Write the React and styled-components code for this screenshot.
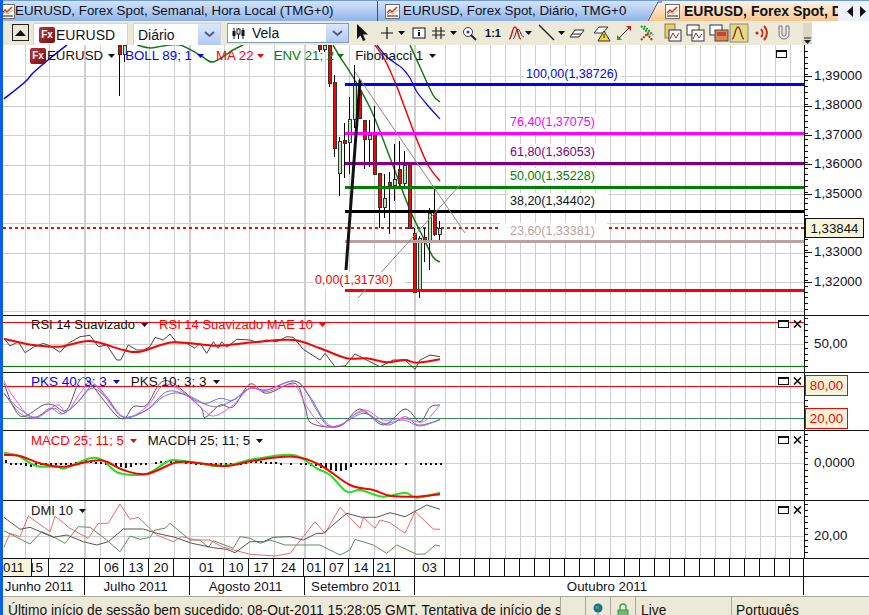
import styled, { createGlobalStyle } from "styled-components"

const GlobalStyle = createGlobalStyle`
html, body {
    margin: 0;
    padding: 0;
    overflow: hidden;
    background: white;
}
* { box-sizing: border-box; }
`

// points are read from the 3x crops, so they get scaled back to page pixels here
const crop = (str, ox, oy) =>
    str.trim().split(/\s+/).map((p) => {
        const [x, y] = p.split(",").map(Number)
        return `${(ox + x / 3).toFixed(1)},${(oy + y / 3).toFixed(1)}`
    }).join(" ")

// catmull-rom through the points, for the averaged lines
const curve = (str) => {
    const p = str.trim().split(/\s+/).map((s) => s.split(",").map(Number))
    let d = `M${p[0][0]} ${p[0][1]}`
    for (let i = 0; i < p.length - 1; i++) {
        const a = p[i - 1] || p[i]
        const b = p[i]
        const c = p[i + 1]
        const e = p[i + 2] || c
        const c1 = [b[0] + (c[0] - a[0]) / 6, b[1] + (c[1] - a[1]) / 6]
        const c2 = [c[0] - (e[0] - b[0]) / 6, c[1] - (e[1] - b[1]) / 6]
        d += `C${c1[0].toFixed(1)} ${c1[1].toFixed(1)} ${c2[0].toFixed(1)} ${c2[1].toFixed(1)} ${c[0]} ${c[1]}`
    }
    return d
}

const GRID_X = [25, 49, 85, 100, 124, 149, 174, 190, 224, 249, 274, 305, 325, 349, 374, 395, 415, 445]
for (let x = 460; x < 804; x += 15) GRID_X.push(x)
const THICK = [85, 190, 305, 415]

const Window = styled.div`
width: 869px;
height: 615px;
overflow: hidden;
display: flex;
flex-direction: column;
border-left: 3px solid #0a5fe8;
font-family: "Liberation Sans", Arial, sans-serif;
color: #10101c;
background: white;
`

const TabBar = styled.div`
position: relative;
height: 21px;
flex: none;
display: flex;
background: linear-gradient(#d3e3fa 0, #b9d1f3 40%, #8fb3e8 100%);
border-top: 1px solid #6f9ade;
`

const Tab = styled.div`
width: ${(p) => p.$w}px;
flex: none;
display: flex;
align-items: center;
gap: ${(p) => p.$gap}px;
font-size: 13.35px;
line-height: 20px;
white-space: nowrap;
overflow: hidden;
border-right: 1px solid ${(p) => (p.$last ? "transparent" : "#2b4f9c")};
`

const ActiveTab = styled(Tab)`
width: 191px;
margin-left: -11px;
padding-left: 18px;
font-size: 14px;
font-weight: bold;
border-right: none;
background: linear-gradient(#fff3e2, #f9c68e);
clip-path: polygon(10px 0, 100% 0, 100% 100%, 0 100%);
`

const TabSlant = styled.svg`
position: absolute;
left: 644px;
top: 0;
`

const TabIcon = styled.svg`
flex: none;
margin-left: ${(p) => p.$ml}px;
`

const TabArrows = styled.div`
flex: 1;
display: flex;
align-items: center;
gap: 7px;
padding-left: 9px;
background: #eef3fb;
`

const ToolRow = styled.div`
height: 24px;
flex: none;
display: flex;
`

const Toolbar = styled.div`
width: 809px;
height: 24px;
display: flex;
align-items: flex-start;
padding: 2px 0 0 9px;
background: #ece9d8;
border-radius: 0 0 3px 0;
`

const CollapseButton = styled.div`
width: 17px;
height: 17px;
margin-top: 1px;
display: flex;
align-items: center;
justify-content: center;
border: 1px solid #222;
`

const SymbolBox = styled.div`
width: 95px;
height: 22px;
margin-left: 4px;
display: flex;
align-items: center;
gap: 1px;
padding: 0 0 0 5px;
font-size: 14px;
background: white;
border: 1px solid #c9d3e2;
border-bottom: none;
`

const Combo = styled.div`
width: ${(p) => p.$w}px;
height: ${(p) => (p.$tall ? 20 : 22)}px;
margin-left: ${(p) => p.$ml}px;
display: flex;
align-items: center;
justify-content: space-between;
font-size: 14px;
padding-left: 4px;
background: white;
border: 1px solid ${(p) => (p.$tall ? "#7f9db9" : "#c9d3e2")};
${(p) => (p.$tall ? "" : "border-bottom: none;")}
`

const ComboLabel = styled.span`
display: flex;
align-items: center;
gap: 7px;
`

const ComboArrow = styled.div`
width: 22px;
height: 100%;
display: flex;
align-items: center;
justify-content: center;
background: linear-gradient(#dbe6fb, #b4caf3);
`

const Tool = styled.div`
width: ${(p) => p.$w || 20}px;
height: 20px;
flex: none;
margin-left: ${(p) => p.$ml || 0}px;
display: flex;
align-items: center;
justify-content: center;
font-size: 11px;
font-weight: bold;
`

const Grip = styled.div`
width: 9px;
height: 21px;
flex: none;
margin-left: ${(p) => p.$ml}px;
display: flex;
align-items: flex-end;
justify-content: center;
background: #dcd8c4;
`

const Charts = styled.div`
flex: none;
display: flex;
flex-direction: column;
`

const Pane = styled.div`
height: ${(p) => p.$h}px;
flex: none;
display: flex;
border-bottom: 1px solid #111;
`

const Plot = styled.div`
position: relative;
width: 801px;
flex: none;
height: 100%;
overflow: hidden;
svg { display: block; }
`

const Axis = styled.div`
position: relative;
flex: 1;
height: 100%;
border-left: 1px solid #111;
svg { display: block; }
`

const AxisLabel = styled.div`
position: absolute;
left: 9px;
top: ${(p) => p.$y}px;
font-size: 13.3px;
line-height: 16px;
white-space: nowrap;
`

const PriceTag = styled.div`
position: absolute;
left: 0;
top: ${(p) => p.$y}px;
width: ${(p) => p.$w}px;
height: ${(p) => p.$h}px;
display: flex;
align-items: center;
justify-content: center;
font-size: 13.3px;
color: ${(p) => p.$color};
background: #f5f5dc;
border: 1px solid ${(p) => p.$border};
`

const Legend = styled.div`
position: absolute;
left: ${(p) => p.$left}px;
top: ${(p) => p.$top}px;
display: flex;
align-items: center;
font-size: ${(p) => p.$size}px;
line-height: 16px;
white-space: nowrap;
`

const LegendItem = styled.span`
display: flex;
align-items: center;
gap: ${(p) => p.$gap || 6}px;
margin-right: ${(p) => p.$mr || 0}px;
color: ${(p) => p.$color};
`

const LegendFx = styled.span`
display: flex;
margin-right: 1px;
`

const FibLabel = styled.div`
position: absolute;
left: ${(p) => p.$x}px;
top: ${(p) => p.$y}px;
width: ${(p) => p.$w}px;
height: 17px;
padding-left: ${(p) => p.$pad}px;
font-size: 12.5px;
line-height: 17px;
white-space: nowrap;
color: ${(p) => p.$color};
background: white;
`

const PaneButtons = styled.div`
position: absolute;
right: ${(p) => p.$right}px;
top: ${(p) => p.$top}px;
display: flex;
gap: 4px;
`

const FxBadge = styled.span`
width: 16px;
height: 16px;
flex: none;
display: flex;
align-items: center;
justify-content: center;
font-size: 10px;
font-weight: bold;
color: white;
border-radius: 2px;
background: linear-gradient(135deg, #b5333a, #7d0f16);
`

const TimeRow = styled.div`
height: ${(p) => p.$h}px;
flex: none;
display: flex;
border-bottom: ${(p) => (p.$line ? "1px solid #111" : "none")};
`

const TimeCell = styled.div`
width: ${(p) => p.$w}px;
flex: none;
display: flex;
align-items: center;
justify-content: ${(p) => p.$align || "center"};
padding-right: ${(p) => p.$pr || 0}px;
overflow: hidden;
font-size: 13.3px;
white-space: nowrap;
border-right: 1px solid #111;
background: ${(p) => p.$bg || "white"};
`

const StatusBar = styled.div`
flex: 1;
display: flex;
margin-top: 1px;
background: #ece9d8;
border-top: 1px solid #a9a79a;
font-size: 13.8px;
color: #16100c;
`

const StatusCell = styled.div`
width: ${(p) => p.$w}px;
flex: ${(p) => (p.$grow ? 1 : "none")};
overflow: hidden;
white-space: nowrap;
padding: 6px 0 0 ${(p) => p.$pad || 0}px;
border-right: ${(p) => (p.$grow ? "none" : "1px solid #a9a79a")};
display: flex;
justify-content: ${(p) => (p.$center ? "center" : "flex-start")};
`

function Caret({ color = "#111", size = 7 }) {
    return (
        <svg width={size} height={4} viewBox="0 0 7 4">
            <polygon points="0,0 7,0 3.5,4" fill={color} />
        </svg>
    )
}

function ChartTabIcon({ ml = 0 }) {
    return (
        <TabIcon $ml={ml} width="15" height="15" viewBox="0 0 15 15">
            <rect x="0.5" y="0.5" width="14" height="14" fill="white" stroke="#6d6d6d" />
            <polyline points="2,9 5,6 7,8 12,3" fill="none" stroke="#d9301e" strokeWidth="1.5" />
            <polyline points="2,11 5,8 8,10 13,6" fill="none" stroke="#e5a03a" />
            <rect x="2" y="11" width="11" height="2" fill="#8a8a8a" />
        </TabIcon>
    )
}

function ChevronDown() {
    return (
        <svg width="11" height="7" viewBox="0 0 11 7">
            <polyline points="1,1 5.5,5 10,1" fill="none" stroke="#4d6185" strokeWidth="2" />
        </svg>
    )
}

function MiniChart({ x = 5, y = 3 }) {
    return (
        <g>
            <rect x={x} y={y} width="12" height="11" fill="white" stroke="#333" />
            <polyline points={`${x + 1},${y + 9} ${x + 4},${y + 3} ${x + 7},${y + 8} ${x + 10},${y + 4}`} fill="none" stroke="#b02020" />
        </g>
    )
}

const Svg = ({ children }) => <svg width="20" height="20" viewBox="0 0 20 20">{children}</svg>

const wave = "M3 16 C6 16 6 4 9 4 C12 4 12 16 15 16"

const TOOLS = [
    { ml: 2, icon: <polygon points="6,1 6,16 9.5,12.5 12,18 14.5,17 12,11.5 17,11.5" fill="#111" /> },
    { ml: 6, icon: <path d="M10 4v12M4 10h12" stroke="#111" strokeWidth="1.2" /> },
    { w: 8, caret: true },
    { ml: 4, icon: <><rect x="4" y="5" width="12" height="10" fill="white" stroke="#111" /><path d="M9 7h2v1H9zM9 9h2v4H9z" fill="#111" /></> },
    { icon: <path d="M7 4v12M12 4v12M3 8h13M3 12h13" stroke="#222" strokeWidth="1.2" /> },
    { w: 8, caret: true },
    { ml: 3, icon: <><circle cx="8" cy="9" r="4.5" fill="white" stroke="#334" /><circle cx="8" cy="9" r="1.6" fill="#2244cc" /><path d="M11 12l5 5" stroke="#222" strokeWidth="2" /></> },
    { ml: 3, text: "1:1" },
    { ml: 3, icon: <><path d={wave} fill="none" stroke="#c01818" strokeWidth="1.4" /><path d="M7 16 C9 16 10 6 12 6 C14 6 15 14 18 14" fill="none" stroke="#333" /></> },
    { w: 8, ml: -2, caret: true },
    { ml: 5, icon: <path d="M2 2l15 15" stroke="#222" strokeWidth="1.4" /> },
    { w: 8, caret: true },
    { ml: 2, icon: <path d="M3 14l5-7h9l-5 7z M5 11h9" fill="white" stroke="#222" /> },
    { ml: 5, icon: <><path d="M2 10l5-6h9l-5 6z" fill="white" stroke="#333" /><polygon points="12,8 18,18 6,18" fill="#f4d53a" stroke="#333" /><path d="M12 11v4" stroke="#222" /></> },
    { ml: 2, icon: <><path d="M4 16L16 4" stroke="#222" /><polygon points="12,3 17,3 17,8" fill="#d02020" /><polygon points="3,12 3,17 8,17" fill="#28a428" /></> },
    { ml: 3, icon: <><path d="M4 3l9 9M7 3l9 9" stroke="#1f9a2c" strokeWidth="2" strokeDasharray="2 1" /><path d="M4 17l6-6M15 17l-5-6" stroke="#c02525" strokeWidth="2" strokeDasharray="2 1" /></> },
    { ml: 6, icon: <><rect x="2" y="1" width="10" height="14" fill="#e9c97a" stroke="#8a7a50" /><rect x="6" y="7" width="12" height="11" fill="white" stroke="#333" /><path d="M7 16l3-6 3 5 3-5" fill="none" stroke="#b02020" /></> },
    { ml: 3, icon: <><rect x="1" y="2" width="12" height="10" fill="white" stroke="#333" /><MiniChart x={6} y={7} /></> },
    { ml: 3, icon: <><rect x="1" y="2" width="12" height="10" fill="white" stroke="#333" /><rect x="6" y="7" width="13" height="11" fill="#d88a4a" stroke="#445" /><rect x="8" y="9" width="9" height="4" fill="#c0453a" /></> },
    { icon: <><rect x="1" y="1" width="18" height="18" fill="#dfdc86" stroke="#888" /><path d={wave} fill="none" stroke="#a02020" strokeWidth="1.3" /></> },
    { ml: 3, icon: <><circle cx="5" cy="10" r="1.6" fill="#d02a1f" /><path d="M9 6a6 6 0 0 1 0 8M12 3a10 10 0 0 1 0 14" fill="none" stroke="#c9301f" strokeWidth="2" /></> },
    { ml: 2, icon: <path d="M5 3v8a5 5 0 0 0 10 0V3h-3v8a2 2 0 0 1-4 0V3z" fill="#e9e7dc" stroke="#777" /> },
]

function Toolbars() {
    return (
        <ToolRow>
            <Toolbar>
                <CollapseButton>
                    <svg width="11" height="6" viewBox="0 0 11 6"><polygon points="0,6 11,6 5.5,0" fill="#111" /></svg>
                </CollapseButton>
                <SymbolBox><FxBadge>Fx</FxBadge>EURUSD</SymbolBox>
                <Combo $w={88} $ml={5}><ComboLabel>Diário</ComboLabel><ComboArrow><ChevronDown /></ComboArrow></Combo>
                <Combo $w={122} $ml={6} $tall>
                    <ComboLabel>
                        <svg width="13" height="11" viewBox="0 0 13 11">
                            <path d="M2 0v11M6.5 0v11M11 0v11" stroke="#111" />
                            <rect x="0.5" y="3" width="3" height="5" fill="#111" />
                            <rect x="5" y="1" width="3" height="5" fill="white" stroke="#111" />
                            <rect x="9.5" y="2" width="3" height="6" fill="#111" />
                        </svg>
                        Vela
                    </ComboLabel>
                    <ComboArrow><ChevronDown /></ComboArrow>
                </Combo>
                {TOOLS.map((t, i) => (
                    <Tool key={i} $w={t.w} $ml={t.ml}>
                        {t.caret ? <Caret /> : t.text ? t.text : <Svg>{t.icon}</Svg>}
                    </Tool>
                ))}
                <Grip $ml={9}><svg width="7" height="7" viewBox="0 0 7 7"><path d="M0 1h7" stroke="#222" /><polygon points="0,3 7,3 3.5,7" fill="#222" /></svg></Grip>
            </Toolbar>
        </ToolRow>
    )
}

function Tabs() {
    return (
        <TabBar>
            <Tab $w={375} $gap={0}><ChartTabIcon ml={-3} />EURUSD, Forex Spot, Semanal, Hora Local (TMG+0)</Tab>
            <Tab $w={280} $gap={3} $last><ChartTabIcon ml={7} />EURUSD, Forex Spot, Diário, TMG+0</Tab>
            <ActiveTab $gap={4}><ChartTabIcon />EURUSD, Forex Spot, Diário, TMG+0</ActiveTab>
            <TabSlant width="16" height="21" viewBox="0 0 16 21">
                <path d="M1 20L11 1h4" fill="none" stroke="#2b4f9c" />
            </TabSlant>
            <TabArrows>
                <svg width="6" height="11" viewBox="0 0 6 11"><polygon points="6,0 6,11 0,5.5" fill="#111" /></svg>
                <svg width="6" height="11" viewBox="0 0 6 11"><polygon points="0,0 0,11 6,5.5" fill="#111" /></svg>
            </TabArrows>
        </TabBar>
    )
}

function Grid({ top, bottom, rows = [] }) {
    return (
        <g shapeRendering="crispEdges">
            {rows.map((y) => <line key={y} x1="3" x2="804" y1={y} y2={y} stroke="#cfcfcf" />)}
            {GRID_X.map((x) => (
                <line key={x} x1={x} x2={x} y1={top} y2={bottom} stroke="#cfcfcf" strokeWidth={THICK.includes(x) ? 2 : 1} />
            ))}
        </g>
    )
}

function Line({ pts, color, w = 1 }) {
    return <polyline points={pts} fill="none" stroke={color} strokeWidth={w} strokeLinejoin="round" />
}

function Curve({ pts, color, w = 1 }) {
    return <path d={curve(pts)} fill="none" stroke={color} strokeWidth={w} />
}

function RestoreClose({ top, close = true }) {
    return (
        <PaneButtons $top={top} $right={close ? 2 : 17}>
            <svg width="11" height="8" viewBox="0 0 11 8">
                <rect x="0.5" y="0.5" width="10" height="7" fill="white" stroke="#111" />
                <path d="M0 1.5h11" stroke="#111" />
            </svg>
            {close && (
                <svg width="9" height="8" viewBox="0 0 9 8">
                    <path d="M1 0.5l7 7M8 0.5l-7 7" stroke="#111" strokeWidth="1.6" />
                </svg>
            )}
        </PaneButtons>
    )
}

function Ticks({ top, bottom, step, majors = [] }) {
    const lines = []
    for (let y = bottom; y > top; y -= step) lines.push(y)
    return (
        <svg width="12" height={bottom - top} viewBox={`0 ${top} 12 ${bottom - top}`}>
            <g stroke="#111" shapeRendering="crispEdges">
                {lines.map((y) => <line key={y} x1="0" x2="3" y1={Math.round(y) + 0.5} y2={Math.round(y) + 0.5} />)}
                {majors.map((y) => <line key={y} x1="0" x2="7" y1={y} y2={y} />)}
            </g>
        </svg>
    )
}

// x, wick top, wick bottom, body top, body bottom, up
const CANDLES = [
    [119, 45, 96, 45, 54, 0], [124, 45, 62, 45, 54, 1], [319, 45, 52, 45, 49, 0], [324, 45, 52, 45, 49, 1],
    [329, 45, 87, 45, 83, 0], [334, 75, 157, 82, 148, 0], [339, 137, 196, 141, 173, 1], [344, 123, 178, 140, 143, 0],
    [349, 97, 174, 119, 142, 1], [354, 65, 128, 85, 119, 1], [359, 78, 118, 90, 118, 0], [364, 120, 169, 120, 139, 0],
    [369, 120, 167, 135, 139, 1], [374, 106, 175, 135, 174, 0], [379, 173, 228, 173, 207, 0], [384, 174, 218, 198, 207, 1],
    [389, 172, 234, 182, 185, 0], [394, 144, 201, 179, 185, 1], [399, 141, 188, 169, 183, 0], [404, 151, 187, 165, 183, 1],
    [409, 165, 228, 165, 228, 0], [414, 228, 292, 233, 292, 0], [419, 236, 298, 238, 290, 1], [424, 228, 262, 237, 240, 0],
    [429, 208, 270, 213, 240, 1], [434, 188, 236, 213, 234, 0], [439, 221, 240, 228, 234, 1],
]

const FIB_LINES = [
    [84, "#0000ff", 3], [133, "#ff00ff", 3], [163, "#800080", 3], [187.5, "#008000", 3],
    [211.5, "#000000", 2.5], [241.5, "#bc9f9f", 3], [290.5, "#ff0000", 3],
]

function MainPane() {
    return (
        <Pane $h={271}>
            <Plot>
                <svg width="801" height="270" viewBox="3 45 801 270">
                    <Grid top={45} bottom={315} rows={[76, 106, 135, 165, 194, 223, 253, 282, 311]} />
                    <line x1="3" x2="804" y1="228" y2="228" stroke="#ff0000" strokeWidth="2" strokeDasharray="3 3" />
                    <Curve pts="4,99 25,82 33,73 48,60 67,45" color="#0000ff" w={1.5} />
                    <Curve pts="137,45 150,48 163,46 180,45 200,55 213,62 233,50 243,45" color="#157a15" w={1.5} />
                    <Curve pts="377,45 387,57 402,68 410,78 417,92 430,108 440,119" color="#0000ff" w={1.2} />
                    <Curve pts="410,45 420,67 433,95 440,102" color="#157a15" w={1.5} />
                    <Curve pts="333,45 340,57 353,77 372,112 392,163 410,210 423,237 433,257 440,262" color="#157a15" w={1.5} />
                    <Curve pts="375,45 385,60 397,87 415,135 428,165 440,181" color="#ff0000" w={1.5} />
                    <g shapeRendering="crispEdges">
                        {CANDLES.map(([x, t, b, bt, bb, up]) => (
                            <g key={x}>
                                <line x1={x + 0.5} x2={x + 0.5} y1={t} y2={b} stroke="#000" />
                                <rect x={x - 1} y={bt} width="3" height={bb - bt} fill={up ? "#b9e8b4" : "#ff0000"} stroke="#333" />
                            </g>
                        ))}
                        {FIB_LINES.map(([y, c, w]) => <line key={y} x1="345" x2="804" y1={y} y2={y} stroke={c} strokeWidth={w} />)}
                    </g>
                    <Line pts="346,270 360,80" color="#111" w={3} />
                    <Line pts="355,72 465,233" color="#8a8a8a" />
                    <Line pts="358,298 460,185" color="#8a8a8a" />
                </svg>
                <Legend $left={27} $top={3} $size={13.3}>
                    <LegendFx><FxBadge>Fx</FxBadge></LegendFx>
                    <LegendItem $gap={5} $mr={10} $color="#111">EURUSD <Caret /></LegendItem>
                    <LegendItem $gap={5} $mr={12} $color="#0000ff">BOLL 89; 1 <Caret color="#0000ff" /></LegendItem>
                    <LegendItem $gap={3} $mr={10} $color="#ff0000">MA 22 <Caret color="#ff0000" /></LegendItem>
                    <LegendItem $gap={3} $mr={11} $color="#008000">ENV 21; 2 <Caret color="#008000" /></LegendItem>
                    <LegendItem $gap={6} $color="#111">Fibonacci 1 <Caret /></LegendItem>
                </Legend>
                <FibLabel $x={521} $y={21} $w={97} $pad={2} $color="#0000ff">100,00(1,38726)</FibLabel>
                <FibLabel $x={505} $y={69} $w={100} $pad={2} $color="#ff00ff">76,40(1,37075)</FibLabel>
                <FibLabel $x={505} $y={99} $w={100} $pad={2} $color="#800080">61,80(1,36053)</FibLabel>
                <FibLabel $x={505} $y={123} $w={100} $pad={2} $color="#008000">50,00(1,35228)</FibLabel>
                <FibLabel $x={505} $y={148} $w={100} $pad={2} $color="#111">38,20(1,34402)</FibLabel>
                <FibLabel $x={497} $y={178} $w={107} $pad={10} $color="#bc9f9f">23,60(1,33381)</FibLabel>
                <FibLabel $x={310} $y={227} $w={92} $pad={2} $color="#ff0000">0,00(1,31730)</FibLabel>
                <RestoreClose top={5} close={false} />
            </Plot>
            <Axis>
                <Ticks top={45} bottom={315} step={5.87} majors={[76.5, 106.5, 135.5, 164.5, 194.5, 223.5, 252.5, 282.5]} />
                {[["1,39000", 76], ["1,38000", 105], ["1,37000", 135], ["1,36000", 164], ["1,35000", 194], ["1,33000", 252], ["1,32000", 282]].map(([t, y]) => (
                    <AxisLabel key={t} $y={y - 45 - 8}>{t}</AxisLabel>
                ))}
                <PriceTag $y={173} $w={59} $h={20} $color="#111" $border="#111">1,33844</PriceTag>
            </Axis>
        </Pane>
    )
}

const RSI_BLACK = "12,85 30,108 55,95 75,128 100,112 130,100 155,110 180,127 205,100 240,80 270,76 295,110 320,105 350,150 362,150 385,105 410,120 430,120 450,110 465,82 490,90 510,72 530,98 560,100 585,115 600,100 620,130 640,95 655,115 665,95 680,112 710,88 750,90 775,98 800,90 830,95 860,80 880,82 910,118 960,150 975,130 1005,170 1035,168 1065,132 1100,150 1140,170 1180,150 1215,150 1245,178 1260,150 1290,135 1320,140"
const RSI_RED = "12,87 50,95 100,105 180,110 270,93 370,120 420,125 520,97 650,107 760,97 880,90 960,115 1040,145 1100,145 1160,157 1215,150 1250,158 1320,148"
const PKS_BLUE = "12,250 50,290 105,322 150,295 185,312 230,280 280,225 320,260 370,320 440,300 490,260 540,250 610,280 660,265 700,270 750,235 800,240 885,213 930,260 980,340 1020,345 1090,310 1150,340 1210,330 1260,348 1320,328"
const PKS_MAGENTA = "12,212 40,260 100,325 170,285 200,305 240,250 270,215 300,240 370,322 440,290 490,225 540,240 600,290 640,318 700,285 750,235 800,245 880,225 920,290 965,345 1020,345 1090,300 1150,330 1210,325 1270,335 1320,285"
const PKS_BLACK = "12,220 40,290 70,320 130,285 160,285 200,300 240,210 270,220 360,325 400,290 440,285 480,220 520,220 600,290 615,322 660,285 700,290 750,222 800,250 885,220 915,290 935,340 1020,348 1080,297 1150,345 1215,297 1260,335 1290,292 1320,285"
const PKS_GREY = "12,250 60,310 105,322 160,295 190,310 230,280 275,235 320,265 370,322 440,300 500,245 560,255 640,290 700,270 750,235 800,240 890,215 950,300 980,345 1020,348 1085,305 1160,345 1215,320 1255,345 1320,330"
const MACD_GREEN = "12,68 55,78 110,108 170,110 195,115 270,85 310,92 355,128 435,133 490,102 520,90 600,100 640,108 690,105 760,88 880,75 950,115 990,135 1040,185 1080,180 1150,200 1215,188 1250,203 1320,188"
const MACD_RED = "12,75 60,78 120,100 190,110 280,92 320,95 370,120 440,132 530,97 600,100 680,108 760,92 880,80 960,105 1050,165 1120,180 1170,197 1250,200 1320,193"
const DMI_BLACK = "12,262 60,298 90,292 160,322 200,315 250,335 290,345 325,335 370,297 430,297 470,310 525,322 575,340 640,353 680,358 705,368 750,335 790,335 820,322 870,320 910,330 950,310 970,310 1040,250 1085,262 1130,262 1170,248 1215,260 1280,225 1320,238"
const DMI_RED = "12,352 30,310 60,320 85,258 150,305 165,258 210,295 265,325 295,280 325,280 360,222 390,268 415,262 470,315 520,335 545,320 590,330 630,330 665,350 750,373 825,378 870,370 910,320 945,275 975,310 1020,232 1080,295 1090,262 1125,295 1140,270 1170,278 1215,310 1245,245 1300,297 1320,298"
const DMI_GREEN = "12,302 50,322 90,342 125,305 160,320 195,340 235,290 270,292 320,330 360,365 390,318 420,328 450,322 465,300 495,295 510,280 570,330 600,330 625,352 640,332 700,355 720,320 750,325 780,340 810,330 855,345 885,345 960,345 1020,375 1050,360 1065,328 1120,345 1160,370 1190,345 1250,373 1275,372 1305,345 1320,348"

// MACDH height per bar, one bar every 5px starting at x=5
const HIST = [3, 0, 0, 0, -3, -4, -3, -2, -1, -1, -1, -1, 0, 0, 1, 2, 3, 2, 1, 1, 0, -2, -3, -4, -5, -4, -2, -1, -1, null, 1, 2, 2, 3, 2, 2, 1, 1, 0, 0, -1, -1, -1, -1, 0, 0, 0, 0, 1, 2, 2, 2, 1, 1, 1, 0, null, 0, null, 0, -2, -3, -3, -5, -6, -7, -8, -8, -7, -4, -1, -1, -1, -1, -1, -1, -1, -1, 0, null, 0, null, null, -2, -1, -1, 0, 0]

function SubPane({ h, top, rows, legendTop, legendSize, children, legend, buttons, axis }) {
    return (
        <Pane $h={h + 1}>
            <Plot>
                <svg width="801" height={h} viewBox={`3 ${top} 801 ${h}`}>
                    <Grid top={top} bottom={top + h} rows={rows} />
                    {children}
                </svg>
                <Legend $left={28} $top={legendTop} $size={legendSize}>{legend}</Legend>
                <RestoreClose top={buttons} />
            </Plot>
            <Axis>
                <Ticks top={top} bottom={top + h} step={6} />
                {axis}
            </Axis>
        </Pane>
    )
}

function SubPanes() {
    return (
        <>
            <SubPane h={56} top={316} rows={[344]} legendTop={1} legendSize={13} buttons={4}
                legend={<>
                    <LegendItem $mr={11} $color="#111">RSI 14 Suavizado <Caret /></LegendItem>
                    <LegendItem $color="#ff0000">RSI 14 Suavizado MAE 10 <Caret color="#ff0000" /></LegendItem>
                </>}
                axis={<AxisLabel $y={20}>50,00</AxisLabel>}>
                <line x1="3" x2="804" y1="322.5" y2="322.5" stroke="#ff0000" />
                <line x1="3" x2="804" y1="366.5" y2="366.5" stroke="#008000" />
                <Line pts={crop(RSI_BLACK, 0, 310)} color="#444" />
                <Curve pts={crop(RSI_RED, 0, 310)} color="#ff0000" w={2} />
            </SubPane>
            <SubPane h={57} top={373} rows={[402]} legendTop={1} legendSize={13.5} buttons={4}
                legend={<>
                    <LegendItem $mr={11} $color="#0000ff">PKS 40; 3; 3 <Caret color="#0000ff" /></LegendItem>
                    <LegendItem $color="#111">PKS 10; 3; 3 <Caret /></LegendItem>
                </>}
                axis={<>
                    <PriceTag $y={2} $w={43} $h={21} $color="#ff0000" $border="#ff0000">80,00</PriceTag>
                    <PriceTag $y={35} $w={43} $h={21} $color="#ff0000" $border="#ff0000">20,00</PriceTag>
                </>}>
                <line x1="3" x2="804" y1="386.5" y2="386.5" stroke="#ff0000" />
                <line x1="3" x2="804" y1="418.5" y2="418.5" stroke="#2e8b57" />
                <Curve pts={crop(PKS_BLACK, 0, 310)} color="#555" />
                <Curve pts={crop(PKS_GREY, 0, 310)} color="#8a6f8a" />
                <Curve pts={crop(PKS_BLUE, 0, 310)} color="#6a6aff" />
                <Curve pts={crop(PKS_MAGENTA, 0, 310)} color="#f050f0" />
            </SubPane>
            <SubPane h={69} top={431} rows={[463]} legendTop={2} legendSize={13.2} buttons={5}
                legend={<>
                    <LegendItem $mr={11} $color="#ff0000">MACD 25; 11; 5 <Caret color="#ff0000" /></LegendItem>
                    <LegendItem $color="#111">MACDH 25; 11; 5 <Caret /></LegendItem>
                </>}
                axis={<AxisLabel $y={24}>0,0000</AxisLabel>}>
                <g shapeRendering="crispEdges">
                    {HIST.map((v, i) => v === null ? null : (
                        <rect key={i} x={5 + i * 5} y={v > 0 ? 463 - v : 463} width="2" height={Math.max(Math.abs(v), 1.5)} fill="#111" />
                    ))}
                </g>
                <Curve pts={crop(MACD_GREEN, 0, 430)} color="#22e022" w={2} />
                <Curve pts={crop(MACD_RED, 0, 430)} color="#ff0000" w={2} />
            </SubPane>
            <SubPane h={57} top={501} rows={[536]} legendTop={2} legendSize={13} buttons={5}
                legend={<LegendItem $color="#111">DMI 10 <Caret /></LegendItem>}
                axis={<AxisLabel $y={27}>20,00</AxisLabel>}>
                <Line pts={crop(DMI_GREEN, 0, 430)} color="#5f8f5f" />
                <Line pts={crop(DMI_RED, 0, 430)} color="#f06a6a" />
                <Line pts={crop(DMI_BLACK, 0, 430)} color="#555" />
            </SubPane>
        </>
    )
}

const TICKS = [
    [29, "011", "#f5f5dc", "flex-start"], [17, "15", "#fff", "flex-end", 5], [36, "22"], [15, ""], [24, "06"], [25, "13"], [25, "20"], [16, ""],
    [34, "01"], [25, "10"], [25, "17"], [30, "24"], [21, "01"], [24, "07"], [25, "14"], [21, "21"], [20, ""], [30, "03"],
]
for (let x = 445; x < 790; x += 15) TICKS.push([15, ""])
TICKS.push([14, ""])

function TimeAxis() {
    return (
        <>
            <TimeRow $h={18} $line>
                {TICKS.map(([w, text, bg, align, pr], i) => (
                    <TimeCell key={i} $w={w} $bg={bg} $align={align} $pr={pr}>{text}</TimeCell>
                ))}
            </TimeRow>
            <TimeRow $h={18}>
                <TimeCell $w={82} $pr={9}>Junho 2011</TimeCell>
                <TimeCell $w={105} $pr={3}>Julho 2011</TimeCell>
                <TimeCell $w={115} $pr={3}>Agosto 2011</TimeCell>
                <TimeCell $w={110} $pr={7}>Setembro 2011</TimeCell>
                <TimeCell $w={389} $pr={4}>Outubro 2011</TimeCell>
            </TimeRow>
        </>
    )
}

function Status() {
    return (
        <StatusBar>
            <StatusCell $w={558} $pad={5}>Último início de sessão bem sucedido: 08-Out-2011 15:28:05 GMT. Tentativa de início de sessão</StatusCell>
            <StatusCell $w={25} />
            <StatusCell $w={25} $center>
                <svg width="12" height="14" viewBox="0 0 12 14">
                    <circle cx="6" cy="5" r="4.5" fill="#1e6aa8" />
                    <path d="M3 3h4v3H4z" fill="#3aa24a" />
                    <path d="M6 9v5" stroke="#888" />
                </svg>
            </StatusCell>
            <StatusCell $w={25} $center>
                <svg width="14" height="14" viewBox="0 0 14 14">
                    <path d="M4 7V4a3 3 0 0 1 6 0v3" fill="none" stroke="#5a9a5a" strokeWidth="1.5" />
                    <rect x="2" y="7" width="10" height="7" fill="#6cbf6c" stroke="#3e8a3e" />
                </svg>
            </StatusCell>
            <StatusCell $w={96} $pad={5}>Live</StatusCell>
            <StatusCell $grow $pad={4}>Português</StatusCell>
        </StatusBar>
    )
}

export default function App() {
    return (
        <>
            <GlobalStyle />
            <Window>
                <Tabs />
                <Toolbars />
                <Charts>
                    <MainPane />
                    <SubPanes />
                    <TimeAxis />
                </Charts>
                <Status />
            </Window>
        </>
    )
}
